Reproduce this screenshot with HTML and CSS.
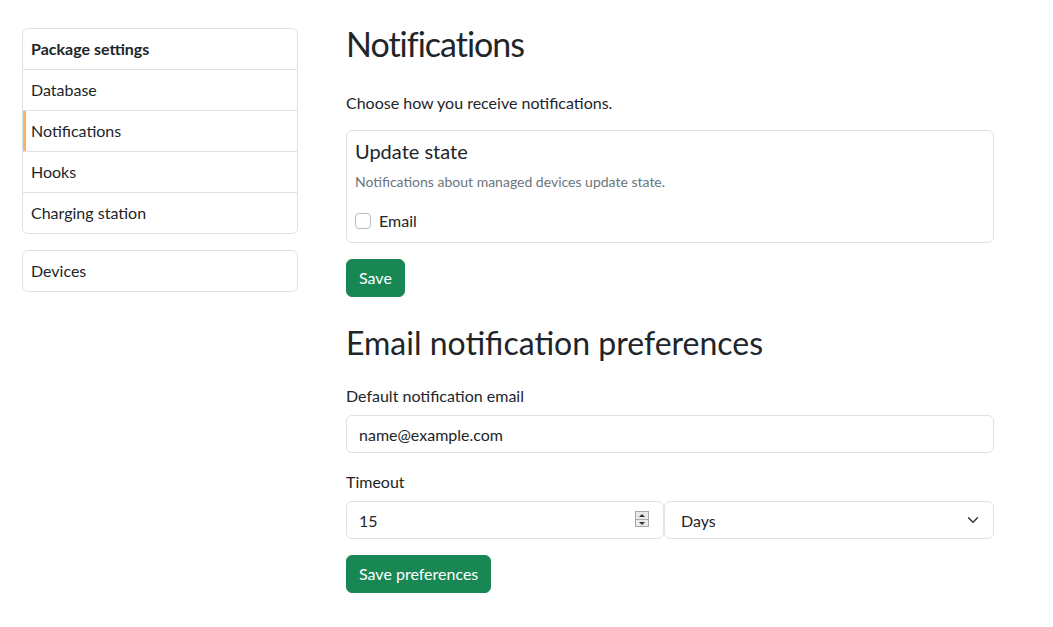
FILE: index.html
```html
<!DOCTYPE html>
<html lang="en">
<head>
<meta charset="utf-8">
<title>Notifications</title>
<link rel="stylesheet" href="styles.css">
</head>
<body>
<div class="layout">
  <aside class="sidebar">
    <div class="list-group">
      <div class="list-item list-head">Package settings</div>
      <a class="list-item" href="#">Database</a>
      <a class="list-item active" href="#">Notifications</a>
      <a class="list-item" href="#">Hooks</a>
      <a class="list-item" href="#">Charging station</a>
    </div>
    <div class="list-group">
      <a class="list-item" href="#">Devices</a>
    </div>
  </aside>
  <main class="main">
    <h1 class="title">Notifications</h1>
    <p class="lead">Choose how you receive notifications.</p>
    <div class="card">
      <h5 class="card-title">Update state</h5>
      <p class="card-desc">Notifications about managed devices update state.</p>
      <label class="check">
        <input type="checkbox" class="check-input">
        <span>Email</span>
      </label>
    </div>
    <button class="btn">Save</button>

    <h2 class="subtitle">Email notification preferences</h2>
    <div class="field field-email">
      <label class="field-label" for="email">Default notification email</label>
      <input id="email" class="control" type="email" value="name@example.com">
    </div>
    <div class="field">
      <label class="field-label" for="timeout">Timeout</label>
      <div class="timeout-row">
        <div class="num-wrap">
          <input id="timeout" class="control num" type="number" value="15">
          <span class="spinner"><span class="spin-up"></span><span class="spin-down"></span></span>
        </div>
        <select class="control select">
          <option>Days</option>
          <option>Hours</option>
        </select>
      </div>
    </div>
    <button class="btn">Save preferences</button>
  </main>
</div>
</body>
</html>
```
FILE: styles.css
```css
* { box-sizing: border-box; }
body {
  margin: 0;
  background: #fff;
  color: #212529;
  font-family: Lato, "Liberation Sans", sans-serif;
  font-size: 16px;
  line-height: 1.5;
}
.layout {
  display: flex;
  gap: 48px;
  padding-left: 22px;
}
.sidebar {
  width: 276px;
  flex: none;
  margin-top: 28px;
  display: flex;
  flex-direction: column;
  gap: 16px;
}
.list-group {
  border: 1px solid #dee2e6;
  border-radius: 6px;
  overflow: hidden;
}
.list-item {
  display: block;
  padding: 8px 8px;
  color: #212529;
  text-decoration: none;
  border-bottom: 1px solid #dee2e6;
  line-height: 24px;
}
.list-item:last-child { border-bottom: 0; }
.list-head { font-weight: 700; }
.list-item.active { box-shadow: inset 3px 0 0 #f4b46c; }

.main {
  width: 648px;
  flex: none;
  padding-top: 22px;
}
.title {
  font-size: 34px;
  letter-spacing: -1px;
  font-weight: 400;
  line-height: 44px;
  margin: 0 0 25px;
}
.lead { margin: 0 0 15px; }
.card {
  border: 1px solid #dee2e6;
  border-radius: 6px;
  padding: 8px 8px 9px;
}
.card-title {
  font-size: 20px;
  font-weight: 400;
  line-height: 1.2;
  margin: 0 0 8px;
}
.card-desc {
  font-size: 14px;
  color: #6c757d;
  margin: 0 0 17px;
}
.check {
  display: flex;
  align-items: center;
  gap: 8px;
  height: 24px;
}
.check-input {
  appearance: none;
  -webkit-appearance: none;
  width: 16px;
  height: 16px;
  margin: 0;
  border: 1px solid #b9bec3;
  border-radius: 4px;
  background: #fff;
}
.btn {
  display: inline-block;
  margin-top: 16px;
  height: 38px;
  padding: 0 12px;
  border: 1px solid #198754;
  border-radius: 6px;
  background: #198754;
  color: #fff;
  font-family: inherit;
  font-size: 16px;
  line-height: 36px;
}
.subtitle {
  font-size: 32px;
  font-weight: 400;
  line-height: 38px;
  margin: 27px 0 22px;
}
.field { margin-bottom: 16px; }
.field-email { margin-bottom: 17px; }
.field + .btn { margin-top: 0; }
.field-label {
  display: block;
  margin-bottom: 7px;
}
.control {
  display: block;
  width: 100%;
  height: 38px;
  padding: 0 12px;
  border: 1px solid #dee2e6;
  border-radius: 6px;
  font-family: inherit;
  font-size: 16px;
  color: #212529;
  background: #fff;
  outline: none;
}
.timeout-row { display: flex; }
.num-wrap {
  position: relative;
  width: 318px;
  flex: none;
}
.num { -moz-appearance: textfield; }
.num::-webkit-inner-spin-button,
.num::-webkit-outer-spin-button { -webkit-appearance: none; margin: 0; }
.spinner {
  position: absolute;
  right: 15px;
  top: 10px;
  width: 14px;
  height: 16px;
  border: 1px solid #a8a8a8;
  background: #e9e9e9;
  display: flex;
  flex-direction: column;
}
.spinner span {
  flex: 1;
  position: relative;
}
.spin-up { border-bottom: 1px solid #a8a8a8; }
.spin-up::after, .spin-down::after {
  content: "";
  position: absolute;
  left: 3px;
  border-left: 3px solid transparent;
  border-right: 3px solid transparent;
}
.spin-up::after { top: 2px; border-bottom: 3px solid #333; }
.spin-down::after { top: 2px; border-top: 3px solid #333; }
.select {
  flex: 1;
  width: auto;
  appearance: none;
  -webkit-appearance: none;
  padding-left: 16px;
  background-image: url("data:image/svg+xml,%3csvg xmlns='http://www.w3.org/2000/svg' viewBox='0 0 16 16'%3e%3cpath fill='none' stroke='%23343a40' stroke-linecap='round' stroke-linejoin='round' stroke-width='2' d='m2 5 6 6 6-6'/%3e%3c/svg%3e");
  background-repeat: no-repeat;
  background-position: right 12px center;
  background-size: 16px 12px;
}
```
